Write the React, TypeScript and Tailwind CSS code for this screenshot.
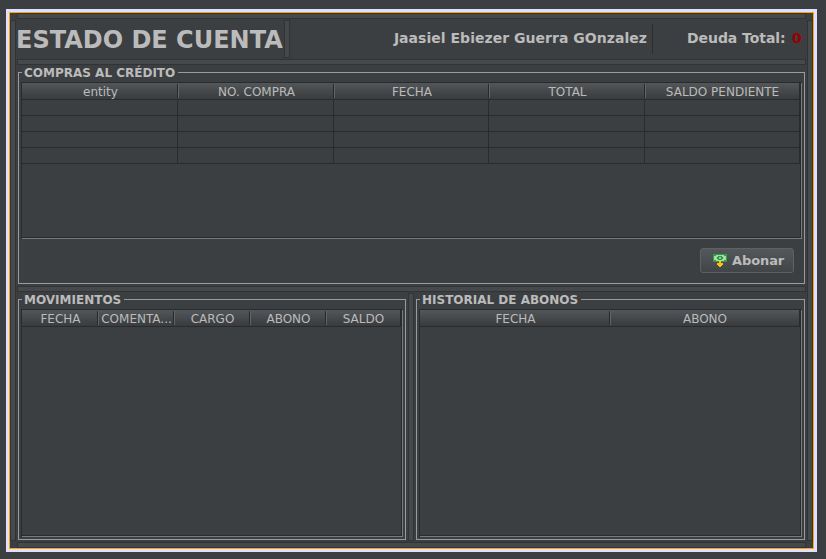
import type { ReactNode } from "react";

function Bar({ className }: { className: string }) {
  return <div className={`shrink-0 border border-[#313335] bg-[#45494b] ${className}`} />;
}

function Panel({ title, labelClass, className, children }: { title: string; labelClass: string; className: string; children: ReactNode }) {
  return (
    <section className={`flex shrink-0 flex-col border border-[#9a9a9a] ${className}`}>
      <h2 className={`-mt-[8px] ml-[3px] h-[17px] shrink-0 whitespace-nowrap bg-[#3c3f41] pl-[2px] text-[12px] font-bold leading-[17px] ${labelClass}`}>
        {title}
      </h2>
      {children}
    </section>
  );
}

type Column = { label: string; width: string };

function Table({ columns, rows = 0, className }: { columns: Column[]; rows?: number; className: string }) {
  return (
    <div className={`ml-[2px] flex shrink-0 flex-col border-l border-t border-[#292b2d] ${className}`}>
      <div className="flex min-h-0 flex-1 flex-col border-b border-r border-[#787a7b]">
        <div className="flex min-h-0 flex-1 flex-col border-b border-r border-[#292b2d]">
          <div className="flex h-[17px] shrink-0 border-b border-r border-[#292b2d] bg-linear-to-b from-[#53575a] to-[#393b3d]">
            {columns.map((c, i) => (
              <div key={c.label} className={`flex h-[16px] shrink-0 items-center ${c.width}`}>
                <span className={`min-w-0 flex-1 whitespace-nowrap pt-[2px] text-center text-[12px] leading-[16px] ${i < columns.length - 1 ? "pl-[2px]" : ""}`}>{c.label}</span>
                {i < columns.length - 1 && <i className="-mr-px h-[14px] w-[2px] shrink-0 border-l border-[#27292b] bg-[#626567]" />}
              </div>
            ))}
          </div>
          {Array.from({ length: rows }, (_, r) => (
            <div key={r} className="flex h-[16px] shrink-0 border-b border-[#292b2d]">
              {columns.map((c) => (
                <div key={c.label} className={`shrink-0 border-r border-[#292b2d] ${c.width}`} />
              ))}
            </div>
          ))}
        </div>
      </div>
    </div>
  );
}

const purchases: Column[] = [
  { label: "entity", width: "w-[156px]" },
  { label: "NO. COMPRA", width: "w-[156px]" },
  { label: "FECHA", width: "w-[155px]" },
  { label: "TOTAL", width: "w-[156px]" },
  { label: "SALDO PENDIENTE", width: "w-[155px]" },
];

const movements: Column[] = [
  { label: "FECHA", width: "w-[76px]" },
  { label: "COMENTA...", width: "w-[76px]" },
  { label: "CARGO", width: "w-[76px]" },
  { label: "ABONO", width: "w-[76px]" },
  { label: "SALDO", width: "w-[75px]" },
];

const payments: Column[] = [
  { label: "FECHA", width: "w-[190px]" },
  { label: "ABONO", width: "w-[190px]" },
];

function MoneyIcon() {
  return (
    <svg width="14" height="13" viewBox="0 0 14 13" shapeRendering="crispEdges" className="shrink-0">
      <rect width="14" height="8" fill="#369b45" />
      <path d="M3 1h8v1h2v4h-2v1H3V6H1V2h2z" fill="#a3d9a2" />
      <path d="M5 2h4v1h1v2H9v1H5V5H4V3h1z" fill="#2c9840" />
      <rect x="6" y="3" width="2" height="2" fill="#8fcf90" />
      <path d="M6 7h2v2h2v2H9v1H8v1H6v-1H5v-1H4V9h2z" fill="#ffc107" />
    </svg>
  );
}

export default function App() {
  return (
    <main className="h-[559px] w-[826px] overflow-hidden bg-[#3c3f41] pl-[6px] pt-[9px] font-['DejaVu_Sans',sans-serif] text-[#bbbbbb]">
      <div className="h-[543px] w-[811px] border-[3px] border-[#e0dfff]">
        <div className="flex h-[537px] flex-col border border-[#ffa500]">
          <Bar className="ml-[7px] h-[6px] w-[789px]" />
          <div className="my-px flex h-[521px] shrink-0 gap-px">
            <Bar className="w-[6px]" />
            <div className="flex w-[789px] shrink-0 flex-col">
              <header className="flex h-[38px] shrink-0">
                <h1 className="-ml-px w-[268px] shrink-0 whitespace-nowrap text-[24px] font-bold leading-[40px]">ESTADO DE CUENTA</h1>
                <Bar className="w-[6px]" />
                <p className="w-[357px] whitespace-nowrap text-right text-[14px] font-bold leading-[36px] tracking-[0.03px]">Jaasiel Ebiezer Guerra GOnzalez</p>
                <div className="ml-[5px] mt-[4px] h-[30px] w-px bg-[#2b2d2f]" />
                <p className="ml-[34px] whitespace-nowrap text-[14px] font-bold leading-[36px]">
                  <span className="tracking-[-0.06px]">Deuda Total:</span> <span className="ml-[1.5px] text-[#990000]">0</span>
                </p>
              </header>
              <Bar className="mt-px h-[6px]" />
              <Panel title="COMPRAS AL CRÉDITO" labelClass="w-[156px]" className="ml-px mt-[7px] h-[212px] w-[787px]">
                <Table columns={purchases} rows={4} className="h-[157px] w-[781px]" />
                <button className="ml-[681px] mt-[9px] flex h-[25px] w-[94px] shrink-0 items-center rounded-[3px] border border-[#5e6162] bg-linear-to-b from-[#54585a] to-[#414547] pl-[12px] text-[13px] font-bold">
                  <MoneyIcon />
                  <span className="ml-[5px] tracking-[-0.1px]">Abonar</span>
                </button>
              </Panel>
              <Bar className="mt-[2px] h-[6px]" />
              <div className="mt-px flex h-[248px] shrink-0">
                <Panel title="MOVIMIENTOS" labelClass="w-[102px]" className="ml-px mt-[6px] h-[241px] w-[388px]">
                  <Table columns={movements} className="h-[228px] w-[382px]" />
                </Panel>
                <Bar className="mx-[2px] w-[6px]" />
                <Panel title="HISTORIAL DE ABONOS" labelClass="w-[161px]" className="mt-[6px] h-[241px] w-[389px]">
                  <Table columns={payments} className="h-[228px] w-[383px]" />
                </Panel>
              </div>
            </div>
            <Bar className="w-[6px]" />
          </div>
          <Bar className="ml-[7px] h-[6px] w-[789px]" />
        </div>
      </div>
    </main>
  );
}
